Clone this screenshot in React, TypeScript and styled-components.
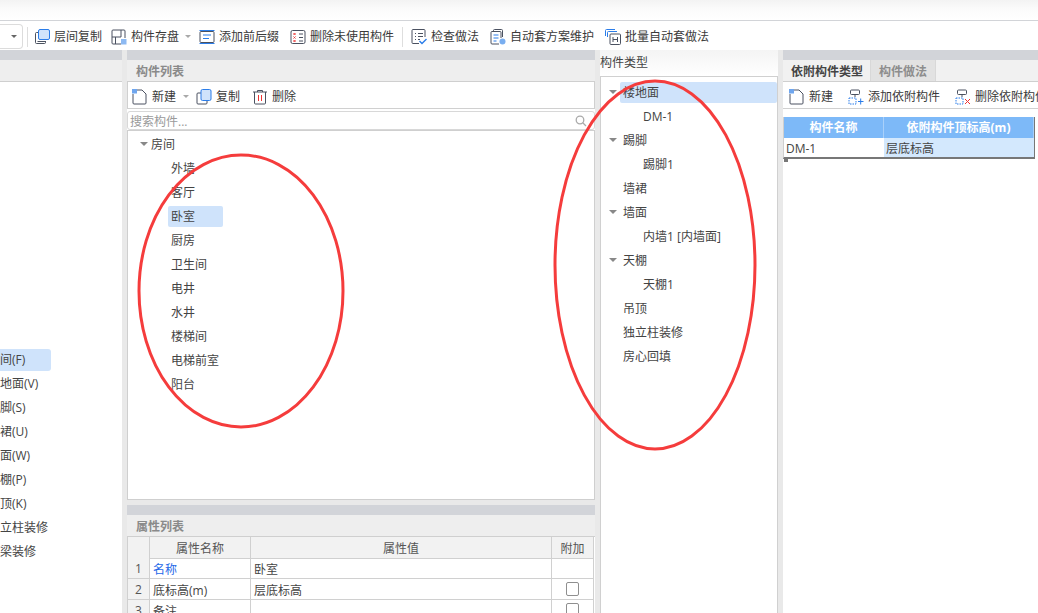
import React from "react";
import styled, { createGlobalStyle } from "styled-components";

const ink = "#4a5160";
const blue = "#2b7de9";
const pale = "#cfe3fb";

const IconBase = ({ children }: { children: React.ReactNode }) => (
  <svg width={16} height={16} viewBox="0 0 16 16" fill="none" style={{ flex: "none" }}>
    {children}
  </svg>
);

const FloorCopyIcon = () => (
  <IconBase>
    <rect x="4.5" y="0.5" width="11" height="10" rx="1.5" fill={pale} stroke={blue} />
    <path d="M4 3.5H2.5a1 1 0 0 0-1 1v9a1 1 0 0 0 1 1h8a1 1 0 0 0 1-1V12" stroke={ink} />
    <path d="M3.5 12.5h8" stroke={ink} />
  </IconBase>
);

const SaveIcon = () => (
  <IconBase>
    <path d="M10 15H2a1 1 0 0 1-1-1V2a1 1 0 0 1 1-1h11a1 1 0 0 1 1 1v7" stroke={ink} />
    <path d="M1 8h9M10 1v7" stroke={ink} />
    <path d="M4.5 8v7" stroke={ink} />
    <rect x="10" y="10" width="5.5" height="5.5" fill="#8db9f2" />
  </IconBase>
);

const AffixIcon = () => (
  <IconBase>
    <path d="M0.5 1.5h15M0.5 14.5h15" stroke={blue} />
    <rect x="1" y="2.5" width="14" height="11" rx="1" stroke={ink} />
    <path d="M4 6h8M4 9.5h6" stroke={blue} />
  </IconBase>
);

const UnusedIcon = () => (
  <IconBase>
    <rect x="1" y="1.5" width="14" height="13" rx="1.5" stroke={ink} />
    <path d="M3.5 4l2 2m0-2l-2 2M3.5 7.5l2 2m0-2l-2 2M3.5 11l2 2m0-2l-2 2" stroke="#e33" />
    <path d="M9 5h4M9 8.5h4M9 12h4" stroke={ink} />
  </IconBase>
);

const CheckIcon = () => (
  <IconBase>
    <path d="M8 14.5H2a1 1 0 0 1-1-1v-12a1 1 0 0 1 1-1h11a1 1 0 0 1 1 1V8" stroke={ink} />
    <path d="M4 4.5h1M7 4.5h5M4 7.5h1M7 7.5h5M4 10.5h1M7 10.5h2" stroke={ink} />
    <path d="M8.5 12l2.5 2.5 4.5-4.5" stroke={blue} strokeWidth="1.4" />
  </IconBase>
);

const SchemeIcon = () => (
  <IconBase>
    <path d="M3.5 2.5V1.5a1 1 0 0 1 1-1h7a1 1 0 0 1 1 1V8" stroke={ink} />
    <path d="M9 15H2a1 1 0 0 1-1-1V3.5a1 1 0 0 1 1-1h8a1 1 0 0 1 1 1V9" stroke={ink} />
    <path d="M3.5 6h5M3.5 9h5M3.5 12h3" stroke={blue} />
    <circle cx="12.5" cy="12.5" r="3" fill="#79aef0" />
  </IconBase>
);

const BatchIcon = () => (
  <IconBase>
    <path d="M0.5 7V1.5a1 1 0 0 1 1-1H10M2.5 8V3.5a1 1 0 0 1 1-1H12" stroke={blue} />
    <rect x="5" y="5" width="10.5" height="10.5" rx="1" stroke={ink} />
    <path d="M8 8v5M12.5 8v5M8 10.5h4.5" stroke={ink} />
  </IconBase>
);

const NewIcon = () => (
  <IconBase>
    <path d="M1 5v9a1 1 0 0 0 1 1h11a1 1 0 0 0 1-1V5l-4-4H5" stroke={ink} />
    <path d="M10 1l4 4" stroke={ink} />
    <rect x="0" y="0" width="5" height="4.5" fill="#6fa6ee" />
  </IconBase>
);

const CopyIcon = () => (
  <IconBase>
    <path d="M5 4H2a1 1 0 0 0-1 1v9a1 1 0 0 0 1 1h8a1 1 0 0 0 1-1v-2" stroke={ink} />
    <rect x="5" y="0.5" width="10" height="11" rx="1.5" fill={pale} stroke={blue} />
  </IconBase>
);

const TrashIcon = () => (
  <IconBase>
    <path d="M1 3h14M5.5 3V1.5h5V3" stroke={ink} />
    <path d="M2.5 3v11a1 1 0 0 0 1 1h9a1 1 0 0 0 1-1V3" stroke={ink} />
    <path d="M6.5 6v6M9.5 6v6" stroke="#e33" />
  </IconBase>
);

const LinkAddIcon = () => (
  <IconBase>
    <rect x="2.5" y="1" width="9" height="4.5" rx="1" stroke={ink} />
    <path d="M7 5.5V8" stroke={ink} />
    <rect x="1" y="9" width="7" height="6" stroke={blue} strokeDasharray="1.5 1" />
    <path d="M10 12.5h5.5M12.7 9.5v6" stroke={blue} />
  </IconBase>
);

const LinkDeleteIcon = () => (
  <IconBase>
    <rect x="2.5" y="1" width="9" height="4.5" rx="1" stroke={ink} />
    <path d="M7 5.5V8" stroke={ink} />
    <rect x="1" y="9" width="7" height="6" stroke={blue} strokeDasharray="1.5 1" />
    <path d="M10 10l5 5m0-5l-5 5" stroke="#e33" />
  </IconBase>
);

const GlobalStyle = createGlobalStyle`
  html, body { margin: 0; padding: 0; background: #fff; }
  body {
    font-family: "Open Sans", "Noto Sans CJK SC", sans-serif;
    font-size: 12px;
    color: #333;
    overflow: hidden;
  }
  * { box-sizing: border-box; }
`;

const Page = styled.div`
  position: relative;
  width: 1038px;
  height: 613px;
  overflow: hidden;
  background: #fff;
`;

const BlurStrip = styled.div`
  height: 21px;
  background: linear-gradient(#f3f3f3, #fbfbfb 45%, #fff);
  border-bottom: 1px solid #d2d4d8;
`;

const TopBar = styled.div`
  display: flex;
  align-items: center;
  height: 29px;
  padding-top: 2px;
  background: #fff;
  white-space: nowrap;
`;

const FloorSelect = styled.div`
  display: flex;
  align-items: center;
  justify-content: flex-end;
  width: 23px;
  height: 25px;
  padding-right: 5px;
  border: 1px solid #dcdcdc;
  border-left: none;
  border-radius: 0 4px 4px 0;
`;

const Caret = styled.span<{ $light?: boolean; $after?: number }>`
  flex: none;
  width: 0;
  height: 0;
  margin-right: ${(p) => p.$after ?? 0}px;
  border-left: 3px solid transparent;
  border-right: 3px solid transparent;
  border-top: 3px solid ${(p) => (p.$light ? "#a9a9a9" : "#666")};
`;

const Divider = styled.span<{ $before: number; $after: number }>`
  flex: none;
  width: 1px;
  height: 20px;
  margin: 0 ${(p) => p.$after}px 0 ${(p) => p.$before}px;
  background: #dedede;
`;

const Tool = styled.span<{ $gap?: number }>`
  flex: none;
  display: inline-flex;
  align-items: center;
  gap: 4px;
  margin-right: ${(p) => p.$gap ?? 10}px;
  color: #3a3a3a;
  line-height: 16px;
`;

const Body = styled.div`
  display: grid;
  grid-template-columns: 122px 468px 178px 1fr;
  column-gap: 5px;
  height: 563px;
  background: #e9e9e9;
`;

const Column = styled.section`
  display: flex;
  flex-direction: column;
  min-width: 0;
  overflow: hidden;
  background: #fff;
`;

const MiddleColumn = styled(Column)`
  background: #e9e9e9;
  gap: 5px;
`;

const ListPane = styled.div`
  flex: 1;
  display: flex;
  flex-direction: column;
  min-height: 0;
  background: #fff;
`;

const PropertyPane = styled.div`
  flex: none;
  height: 108px;
  overflow: hidden;
  background: #fff;
`;

const Strip = styled.div`
  flex: none;
  height: 10px;
  background: #d2d4d9;
`;

const PaneTitle = styled.div`
  flex: none;
  height: 22px;
  padding-left: 9px;
  background: #eeeeee;
  border-bottom: 1px solid #cfcfcf;
  color: #8a8a8a;
  font-weight: 700;
  line-height: 23px;
`;

const LeftList = styled.ul`
  list-style: none;
  width: 63px;
  margin: 0 0 0 -12px;
  padding: 267px 0 0;
`;

const LeftItem = styled.li<{ $active?: boolean }>`
  height: 22px;
  margin-bottom: 2px;
  line-height: 22px;
  white-space: nowrap;
  border-radius: 3px;
  background: ${(p) => (p.$active ? pale : "transparent")};
  color: #444;
`;

const ActionBar = styled.div`
  flex: none;
  display: flex;
  align-items: center;
  height: 27px;
  padding: 3px 0 0 4px;
  background: #fff;
  border: 1px solid #d0d0d0;
  border-top: none;
  white-space: nowrap;
  overflow: hidden;
`;

const SearchBox = styled.div`
  flex: none;
  display: flex;
  align-items: center;
  justify-content: space-between;
  height: 19px;
  margin-top: 2px;
  padding: 0 7px 0 2px;
  border: 1px solid #d8d8d8;
  border-radius: 3px;
  color: #9a9a9a;
  background: #fff;
`;

const TreeBox = styled.div`
  flex: 1;
  padding-top: 1px;
  border: 1px solid #cfcfcf;
  background: #fff;
`;

const TreeRow = styled.div<{ $indent: number }>`
  display: flex;
  align-items: center;
  height: 24px;
  padding-left: ${(p) => p.$indent}px;
  color: #444;
`;

const TreeLabel = styled.span<{ $active?: boolean; $flush?: boolean }>`
  flex: ${(p) => (p.$active ? 1 : "none")};
  height: 21px;
  padding: 0 ${(p) => (p.$flush ? 0 : 3)}px;
  line-height: 21px;
  background: ${(p) => (p.$active ? pale : "transparent")};
  border-radius: 2px;
`;

const RoomLabel = styled(TreeLabel)<{ $selected?: boolean }>`
  flex: none;
  width: 55px;
  background: ${(p) => (p.$selected ? pale : "transparent")};
`;

const Twist = styled.span`
  flex: none;
  width: 0;
  height: 0;
  margin-right: 3px;
  border-left: 4px solid transparent;
  border-right: 4px solid transparent;
  border-top: 4px solid #888;
`;

const PropGrid = styled.div`
  display: grid;
  grid-template-columns: 22px 101px 301px 42px;
  grid-auto-rows: 21px;
  border-left: 1px solid #d0d0d0;
`;

const HeadCell = styled.div`
  display: flex;
  align-items: center;
  justify-content: center;
  height: 22px;
  padding-top: 1px;
  background: #f2f2f2;
  border-right: 1px solid #d0d0d0;
  border-bottom: 1px solid #d0d0d0;
  color: #555;
`;

const IndexCell = styled(HeadCell)`
  height: 21px;
`;

const Cell = styled.div<{ $link?: boolean }>`
  display: flex;
  align-items: center;
  padding: 1px 0 0 3px;
  border-right: 1px solid #d0d0d0;
  border-bottom: 1px solid #d0d0d0;
  color: ${(p) => (p.$link ? "#2468e8" : "#444")};
`;

const CheckCell = styled(Cell)`
  justify-content: center;
  padding: 0;
`;

const CheckBox = styled.span`
  width: 13px;
  height: 14px;
  border: 1px solid #8f8f8f;
  border-radius: 2px;
  background: #fff;
`;

const TypeHeading = styled.div`
  flex: none;
  height: 27px;
  padding-top: 4px;
  line-height: 18px;
  color: #444;
  background: linear-gradient(#f4f4f4, #fff);
  border-bottom: 1px solid #d0d0d0;
`;

const TypeBody = styled.div`
  flex: 1;
  padding-top: 3px;
  border-right: 1px solid #d0d0d0;
  border-left: 1px solid #d0d0d0;
  background: #fff;
`;

const TabRow = styled.div`
  flex: none;
  display: flex;
  height: 22px;
  padding-left: 1px;
  background: #f1f1f1;
  border-bottom: 1px solid #cfcfcf;
`;

const Tab = styled.div<{ $active?: boolean }>`
  padding: 0 ${(p) => (p.$active ? 7 : 8)}px;
  line-height: 23px;
  font-weight: 700;
  color: ${(p) => (p.$active ? "#444" : "#8d8d8d")};
  background: ${(p) => (p.$active ? "#f1f1f1" : "#e2e2e2")};
  border-right: 1px solid #d8d8d8;
`;

const RightBar = styled(ActionBar)`
  padding-left: 6px;
  border-left: none;
  border-right: none;
`;

const LinkTable = styled.div`
  position: relative;
  display: grid;
  grid-template-columns: 100px 150px;
  width: 252px;
  margin-top: 8px;
  border-left: 1px solid #cfcfcf;
  border-right: 2px solid #777;
  border-bottom: 2px solid #777;
`;

const LinkHead = styled.div`
  height: 21px;
  background: #7db9f8;
  border-right: 1px solid #a9d0fa;
  color: #fff;
  font-weight: 700;
  text-align: center;
  line-height: 21px;
`;

const LinkCell = styled.div<{ $active?: boolean }>`
  height: 19px;
  padding-left: 2px;
  line-height: 21px;
  background: ${(p) => (p.$active ? "#d3e8fd" : "#fff")};
  color: #444;
`;

const Handle = styled.span`
  position: absolute;
  left: 0;
  bottom: -5px;
  width: 4px;
  height: 4px;
  background: #777;
`;

const Annotations = styled.svg`
  position: absolute;
  inset: 0;
  pointer-events: none;
`;

const roomKinds = ["房间(F)", "楼地面(V)", "踢脚(S)", "墙裙(U)", "墙面(W)", "天棚(P)", "吊顶(K)", "独立柱装修", "单梁装修"];
const rooms = ["外墙", "客厅", "卧室", "厨房", "卫生间", "电井", "水井", "楼梯间", "电梯前室", "阳台"];
const types: { label: string; indent: number; open?: boolean; active?: boolean }[] = [
  { label: "楼地面", indent: 8, open: true, active: true },
  { label: "DM-1", indent: 39 },
  { label: "踢脚", indent: 8, open: true },
  { label: "踢脚1", indent: 39 },
  { label: "墙裙", indent: 19 },
  { label: "墙面", indent: 8, open: true },
  { label: "内墙1 [内墙面]", indent: 39 },
  { label: "天棚", indent: 8, open: true },
  { label: "天棚1", indent: 39 },
  { label: "吊顶", indent: 19 },
  { label: "独立柱装修", indent: 19 },
  { label: "房心回填", indent: 19 },
];

export default function App() {
  return (
    <Page>
      <GlobalStyle />
      <BlurStrip />
      <TopBar>
        <FloorSelect>
          <Caret />
        </FloorSelect>
        <Divider $before={4} $after={6} />
        <Tool $gap={9}><FloorCopyIcon />层间复制</Tool>
        <Tool $gap={6}><SaveIcon />构件存盘</Tool>
        <Caret $light $after={8} />
        <Tool $gap={11}><AffixIcon />添加前后缀</Tool>
        <Tool $gap={4}><UnusedIcon />删除未使用构件</Tool>
        <Divider $before={4} $after={8} />
        <Tool $gap={11}><CheckIcon />检查做法</Tool>
        <Tool $gap={11}><SchemeIcon />自动套方案维护</Tool>
        <Tool><BatchIcon />批量自动套做法</Tool>
      </TopBar>
      <Body>
        <Column>
          <Strip />
          <PaneTitle />
          <LeftList>
            {roomKinds.map((kind, i) => (
              <LeftItem key={kind} $active={i === 0}>{kind}</LeftItem>
            ))}
          </LeftList>
        </Column>
        <MiddleColumn>
          <ListPane>
            <Strip />
            <PaneTitle>构件列表</PaneTitle>
            <ActionBar>
              <Tool $gap={7}><NewIcon />新建</Tool>
              <Caret $light $after={7} />
              <Tool $gap={12}><CopyIcon />复制</Tool>
              <Tool><TrashIcon />删除</Tool>
            </ActionBar>
            <SearchBox>
              搜索构件...
              <svg width="12" height="12" viewBox="0 0 12 12" fill="none" stroke="#aaa" strokeWidth="1.3">
                <circle cx="5" cy="5" r="3.8" />
                <path d="M8 8l3 3" />
              </svg>
            </SearchBox>
            <TreeBox>
              <TreeRow $indent={12}>
                <Twist />
                <TreeLabel $flush>房间</TreeLabel>
              </TreeRow>
              {rooms.map((room) => (
                <TreeRow key={room} $indent={40}>
                  <RoomLabel $selected={room === "卧室"}>{room}</RoomLabel>
                </TreeRow>
              ))}
            </TreeBox>
          </ListPane>
          <PropertyPane>
            <Strip />
            <PaneTitle>属性列表</PaneTitle>
            <PropGrid>
              <HeadCell />
              <HeadCell>属性名称</HeadCell>
              <HeadCell>属性值</HeadCell>
              <HeadCell>附加</HeadCell>
              <IndexCell>1</IndexCell>
              <Cell $link>名称</Cell>
              <Cell>卧室</Cell>
              <Cell />
              <IndexCell>2</IndexCell>
              <Cell>底标高(m)</Cell>
              <Cell>层底标高</Cell>
              <CheckCell><CheckBox /></CheckCell>
              <IndexCell>3</IndexCell>
              <Cell>备注</Cell>
              <Cell />
              <CheckCell><CheckBox /></CheckCell>
            </PropGrid>
          </PropertyPane>
        </MiddleColumn>
        <Column>
          <TypeHeading>构件类型</TypeHeading>
          <TypeBody>
            {types.map((t) => (
              <TreeRow key={t.label} $indent={t.indent}>
                {t.open && <Twist />}
                <TreeLabel $active={t.active}>{t.label}</TreeLabel>
              </TreeRow>
            ))}
          </TypeBody>
        </Column>
        <Column>
          <Strip />
          <TabRow>
            <Tab $active>依附构件类型</Tab>
            <Tab>构件做法</Tab>
          </TabRow>
          <RightBar>
            <Tool $gap={15}><NewIcon />新建</Tool>
            <Tool $gap={15}><LinkAddIcon />添加依附构件</Tool>
            <Tool><LinkDeleteIcon />删除依附构件</Tool>
          </RightBar>
          <LinkTable>
            <LinkHead>构件名称</LinkHead>
            <LinkHead>依附构件顶标高(m)</LinkHead>
            <LinkCell>DM-1</LinkCell>
            <LinkCell $active>层底标高</LinkCell>
            <Handle />
          </LinkTable>
        </Column>
      </Body>
      <Annotations width="1038" height="613" viewBox="0 0 1038 613" fill="none" stroke="#f53c3c" strokeWidth="3">
        <ellipse cx="241" cy="291" rx="102" ry="136" />
        <ellipse cx="655" cy="265" rx="100" ry="184" />
      </Annotations>
    </Page>
  );
}
